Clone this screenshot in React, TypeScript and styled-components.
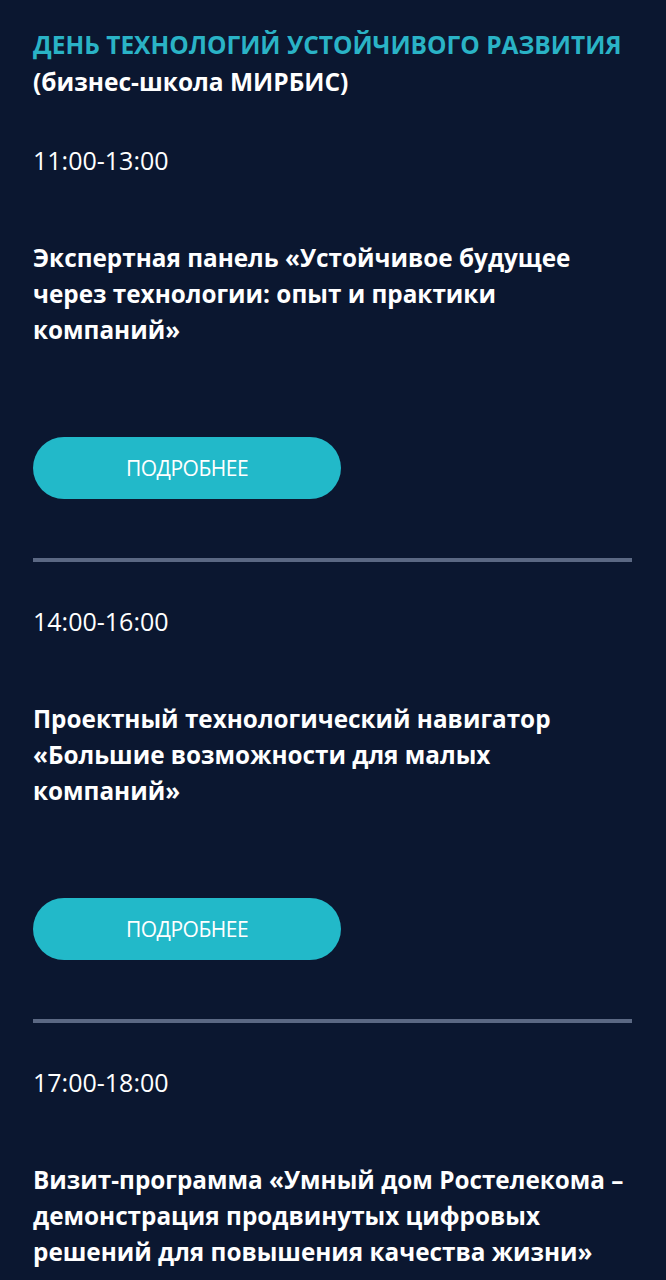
import React from "react";
import styled, { createGlobalStyle } from "styled-components";

const GlobalStyle = createGlobalStyle`
  html, body {
    margin: 0;
    padding: 0;
    background: #0b1730;
  }
  body {
    font-family: "Open Sans", "Noto Sans", sans-serif;
    -webkit-font-smoothing: antialiased;
  }
`;

const Page = styled.div`
  background: #0b1730;
  min-height: 1280px;
  padding: 26px 34px 0 33px;
  box-sizing: border-box;
  color: #ffffff;
`;

const Heading = styled.h1`
  margin: 0;
  font-size: 24.5px;
  font-weight: 700;
  line-height: 38px;
  color: #2ab3c6;
`;

const Subheading = styled.div`
  font-size: 24.5px;
  font-weight: 700;
  line-height: 36px;
  color: #ffffff;
`;

const Session = styled.section`
  display: flex;
  flex-direction: column;
  align-items: flex-start;
  padding-top: 41px;

  &:first-of-type {
    padding-top: 42px;
  }
`;

const Time = styled.div`
  font-size: 25px;
  font-weight: 400;
  line-height: 36px;
`;

const Title = styled.div`
  margin-top: 62px;
  font-size: 24.3px;
  font-weight: 700;
  line-height: 36px;
`;

const MoreButton = styled.button`
  margin-top: 89px;
  width: 308px;
  height: 62px;
  border: none;
  border-radius: 31px;
  background: #22b9c9;
  color: #ffffff;
  font-family: "Open Sans", "Noto Sans", sans-serif;
  font-size: 21px;
  font-weight: 400;
  text-transform: uppercase;
  letter-spacing: -0.5px;
  cursor: pointer;
`;

const Divider = styled.hr`
  width: 100%;
  height: 4px;
  margin: 59px 0 0;
  border: none;
  background: #5b6883;
`;

const sessions = [
  {
    time: "11:00-13:00",
    title: ["Экспертная панель «Устойчивое будущее", "через технологии: опыт и практики", "компаний»"],
    more: true,
  },
  {
    time: "14:00-16:00",
    title: ["Проектный технологический навигатор", "«Большие возможности для малых", "компаний»"],
    more: true,
  },
  {
    time: "17:00-18:00",
    title: [
      "Визит-программа «Умный дом Ростелекома –",
      "демонстрация продвинутых цифровых",
      "решений для повышения качества жизни»",
    ],
    more: false,
  },
];

export default function App() {
  return (
    <>
      <GlobalStyle />
      <Page>
        <Heading>ДЕНЬ ТЕХНОЛОГИЙ УСТОЙЧИВОГО РАЗВИТИЯ</Heading>
        <Subheading>(бизнес-школа МИРБИС)</Subheading>
        {sessions.map((s) => (
          <React.Fragment key={s.time}>
            <Session>
              <Time>{s.time}</Time>
              <Title>
                {s.title.map((line) => (
                  <div key={line}>{line}</div>
                ))}
              </Title>
              {s.more && <MoreButton>Подробнее</MoreButton>}
            </Session>
            {s.more && <Divider />}
          </React.Fragment>
        ))}
      </Page>
    </>
  );
}
